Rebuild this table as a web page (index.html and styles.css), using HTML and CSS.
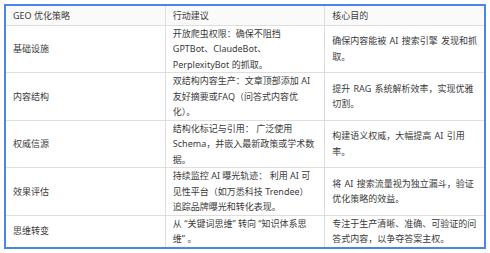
FILE: index.html
```html
<!DOCTYPE html>
<html lang="zh-CN">
<head>
<meta charset="utf-8">
<link rel="stylesheet" href="styles.css">
</head>
<body>
<div class="frame">
<table class="geo">
<thead>
<tr><th>GEO 优化策略</th><th>行动建议</th><th>核心目的</th></tr>
</thead>
<tbody>
<tr><td>基础设施</td><td>开放爬虫权限：确保不阻挡 GPTBot、ClaudeBot、PerplexityBot 的抓取。</td><td>确保内容能被 AI 搜索引擎 发现和抓取。</td></tr>
<tr><td>内容结构</td><td>双结构内容生产：文章顶部添加 AI 友好摘要或FAQ（问答式内容优化）。</td><td>提升 RAG 系统解析效率，实现优雅切割。</td></tr>
<tr><td>权威信源</td><td>结构化标记与引用： 广泛使用 Schema，并嵌入最新政策或学术数据。</td><td>构建语义权威，大幅提高 AI 引用率。</td></tr>
<tr><td>效果评估</td><td>持续监控 AI 曝光轨迹： 利用 AI 可见性平台（如万悉科技 Trendee）追踪品牌曝光和转化表现。</td><td>将 AI 搜索流量视为独立漏斗，验证优化策略的效益。</td></tr>
<tr><td>思维转变</td><td>从 “关键词思维” 转向 “知识体系思维” 。</td><td>专注于生产清晰、准确、可验证的问答式内容，以争夺答案主权。</td></tr>
</tbody>
</table>
</div>
</body>
</html>
```

FILE: styles.css
```css
html, body {
  margin: 0;
  padding: 0;
  background: #ffffff;
}
body {
  padding: 4px 4px 0 4px;
  font-family: "Noto Sans", "Noto Sans CJK SC", sans-serif;
  font-size: 9px;
  color: #3a3a3a;
}
.frame {
  width: 478px;
  border: 2px solid #4a86e8;
  background: #fff;
}
.geo {
  width: 100%;
  table-layout: fixed;
  border-collapse: collapse;
}
.geo th, .geo td {
  text-align: left;
  font-weight: normal;
  vertical-align: middle;
  padding: 0 7px 0 7px;
  line-height: 15.5px;
  border-bottom: 1px solid #dedede;
  border-left: 1px solid #dedede;
}
.geo th:first-child, .geo td:first-child {
  border-left: none;
}
.geo th:last-child, .geo td:last-child {
  padding-right: 6px;
  word-spacing: 1px;
}
.geo tbody tr:last-child td {
  border-bottom: none;
}
.geo th {
  padding-top: 2px;
  padding-bottom: 1px;
  background: #fafafa;
}
```
